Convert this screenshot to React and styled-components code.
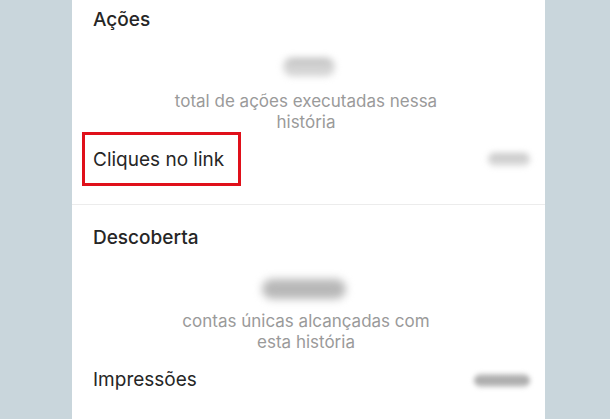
import React from "react";
import styled, { createGlobalStyle } from "styled-components";

const Global = createGlobalStyle`
  html, body { margin: 0; padding: 0; }
  body {
    background: #c9d6dc;
    font-family: Inter, "Noto Sans", sans-serif;
    -webkit-font-smoothing: antialiased;
  }
`;

const Page = styled.div`
  width: 610px;
  height: 419px;
  overflow: hidden;
  display: flex;
`;

const Panel = styled.div`
  margin-left: 72px;
  width: 473px;
  height: 419px;
  background: #ffffff;
  display: flex;
  flex-direction: column;
`;

const Section = styled.section`
  display: flex;
  flex-direction: column;
  padding: 0 15px 0 10px;
  border-bottom: ${(p) => (p.$divider ? "1.5px solid #ececec" : "none")};
  padding-bottom: ${(p) => p.$pb || 0}px;
`;

const Title = styled.h2`
  margin: 0;
  padding: ${(p) => p.$pt}px 0 0 11px;
  font-size: 19px;
  line-height: 22px;
  font-weight: 500;
  color: #262626;
`;

const Metric = styled.div`
  display: flex;
  flex-direction: column;
  align-items: center;
  padding-top: ${(p) => p.$pt}px;
`;

const Blur = styled.div`
  width: ${(p) => p.$w}px;
  height: ${(p) => p.$h}px;
  border-radius: ${(p) => p.$h / 2}px;
  background: ${(p) => p.$bg};
  filter: blur(${(p) => p.$b || 3}px);
  margin-left: ${(p) => p.$dx || 0}px;
`;

const Caption = styled.p`
  margin: ${(p) => p.$mt}px 0 0;
  width: 274px;
  text-align: center;
  font-size: 17px;
  line-height: 21px;
  color: #9a9a9a;
  font-weight: 400;
`;

const Row = styled.div`
  display: flex;
  align-items: center;
  justify-content: space-between;
  margin-top: ${(p) => p.$mt}px;
  height: ${(p) => p.$h}px;
`;

const Label = styled.span`
  font-size: 19px;
  line-height: 22px;
  color: #262626;
  padding-left: 11px;
`;

const Highlight = styled.div`
  box-sizing: border-box;
  width: 159px;
  height: 54px;
  border: 3px solid #e0101a;
  display: flex;
  align-items: center;
  padding-left: 8px;
  font-size: 19px;
  color: #262626;
`;

export default function App() {
  return (
    <>
      <Global />
      <Page>
        <Panel>
          <Section $divider $pb={18}>
            <Title $pt={9}>Ações</Title>
            <Metric $pt={27}>
              <Blur $w={52} $h={18} $dx={6} $bg="linear-gradient(#b4b4b4, #d8d8d8 50%, #cfcfcf)" $b={3.5} />
              <Caption $mt={15}>total de ações executadas nessa história</Caption>
            </Metric>
            <Row $mt={-1} $h={54}>
              <Highlight>Cliques no link</Highlight>
              <Blur $w={42} $h={13} $bg="linear-gradient(#c4c4c4, #dedede)" $b={3} />
            </Row>
          </Section>
          <Section>
            <Title $pt={22}>Descoberta</Title>
            <Metric $pt={30}>
              <Blur $w={84} $h={20} $dx={-4} $bg="#b8b8b8" $b={4} />
              <Caption $mt={12}>contas únicas alcançadas com esta história</Caption>
            </Metric>
            <Row $mt={12} $h={30}>
              <Label>Impressões</Label>
              <Blur $w={56} $h={13} $bg="linear-gradient(#c4c4c4, #a6a6a6, #c8c8c8)" $b={2.5} />
            </Row>
          </Section>
        </Panel>
      </Page>
    </>
  );
}
